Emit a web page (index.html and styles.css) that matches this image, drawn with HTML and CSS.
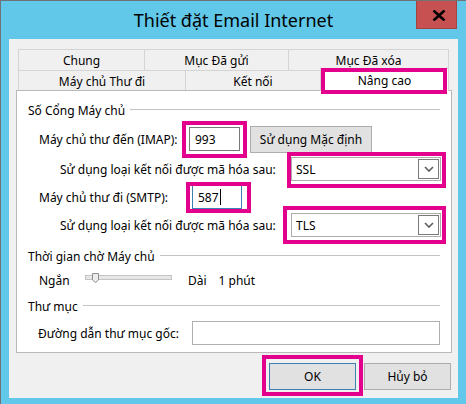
FILE: index.html
```html
<!DOCTYPE html>
<html lang="vi">
<head>
<meta charset="utf-8">
<title>Thiết đặt Email Internet</title>
<link rel="stylesheet" href="styles.css">
</head>
<body>
<div class="window">
  <div class="titlebar">
    <span class="tb-spacer"></span>
    <div class="title">Thiết đặt Email Internet</div>
    <div class="close">
      <svg width="14" height="11" viewBox="0 0 14 11"><path d="M1.5 0.5 L12.5 10.5 M12.5 0.5 L1.5 10.5" stroke="#000" stroke-width="2.6" fill="none"/></svg>
    </div>
  </div>
  <div class="client">
    <div class="tabs">
      <div class="tabrow row1">
        <div class="tab t-chung">Chung</div>
        <div class="tab t-sent">Mục Đã gửi</div>
        <div class="tab t-del">Mục Đã xóa</div>
      </div>
      <div class="tabrow row2">
        <div class="tab t-out">Máy chủ Thư đi</div>
        <div class="tab t-conn">Kết nối</div>
        <div class="tab t-adv selected">Nâng cao<span class="hl hl-tab"></span></div>
      </div>
    </div>
    <div class="panel">
      <div class="group-head gh1"><span>Số Cổng Máy chủ</span><i class="rule"></i></div>

      <div class="row r-imap">
        <span class="lbl lbl-port">Máy chủ thư đến (IMAP):</span>
        <span class="anno">
          <span class="field f-imap">993</span>
          <span class="hl hl-imap"></span>
        </span>
        <span class="btn btn-default">Sử dụng Mặc định</span>
      </div>

      <div class="row r-ssl">
        <span class="lbl lbl-enc">Sử dụng loại kết nối được mã hóa sau:</span>
        <span class="anno">
          <span class="select"><span>SSL</span><span class="drop"><svg width="10" height="6" viewBox="0 0 10 6"><path d="M1 1 L5 5 L9 1" stroke="#5b5b5b" stroke-width="1.6" fill="none"/></svg></span></span>
          <span class="hl hl-ssl"></span>
        </span>
      </div>

      <div class="row r-smtp">
        <span class="lbl lbl-smtp">Máy chủ thư đi (SMTP):</span>
        <span class="anno">
          <span class="field f-smtp focused">587<i class="caret"></i></span>
          <span class="hl hl-smtp"></span>
        </span>
      </div>

      <div class="row r-tls">
        <span class="lbl lbl-enc">Sử dụng loại kết nối được mã hóa sau:</span>
        <span class="anno">
          <span class="select"><span>TLS</span><span class="drop"><svg width="10" height="6" viewBox="0 0 10 6"><path d="M1 1 L5 5 L9 1" stroke="#5b5b5b" stroke-width="1.6" fill="none"/></svg></span></span>
          <span class="hl hl-tls"></span>
        </span>
      </div>

      <div class="group-head gh2"><span>Thời gian chờ Máy chủ</span><i class="rule"></i></div>

      <div class="row r-slider">
        <span class="lbl lbl-short">Ngắn</span>
        <span class="track"><span class="thumb"><svg width="7" height="10" viewBox="0 0 7 10"><path d="M0.5 0.5 H6.5 V7 L3.5 9.5 L0.5 7 Z" fill="#ececec" stroke="#8f8f8f" stroke-width="1"/></svg></span></span>
        <span class="lbl-long">Dài</span>
        <span class="lbl-time">1 phút</span>
      </div>

      <div class="group-head gh3"><span>Thư mục</span><i class="rule"></i></div>

      <div class="row r-path">
        <span class="lbl lbl-path">Đường dẫn thư mục gốc:</span>
        <span class="field f-path"></span>
      </div>
    </div>
    <div class="buttons">
      <span class="anno">
        <span class="btn btn-ok">OK</span>
        <span class="hl hl-ok"></span>
      </span>
      <span class="btn btn-cancel">Hủy bỏ</span>
    </div>
  </div>
</div>
</body>
</html>
```
FILE: styles.css
```css
* { box-sizing: border-box; }
html, body { margin: 0; padding: 0; }
body {
  width: 466px;
  height: 404px;
  overflow: hidden;
  background: #61c8ea;
  font-family: "Noto Sans", "Open Sans", sans-serif;
  font-size: 12px;
  color: #000;
}
.window {
  width: 466px;
  height: 404px;
  background: #61c8ea;
  border-left: 1px solid #6f7376;
  border-top: 1px solid #6f7376;
  display: flex;
  flex-direction: column;
}
.titlebar {
  height: 38px;
  flex: none;
  display: grid;
  grid-template-columns: 1fr auto 1fr;
  padding: 0 9px;
}
.title {
  font-size: 18px;
  line-height: 38px;
  white-space: nowrap;
  color: #000;
}
.close {
  justify-self: end;
  align-self: start;
  width: 41px;
  height: 28px;
  background: #c75050;
  border: 1px solid #a54343;
  border-top: none;
  display: flex;
  align-items: flex-start;
  padding: 9px 0 0 15px;
}
.close svg { display: block; }
.client {
  flex: 1;
  margin: 0 8px 6px 8px;
  background: #f0f0f0;
  padding-top: 10px;
  display: flex;
  flex-direction: column;
}
.tabs { margin-left: 9px; }
.tabrow { display: flex; }
.row1 { height: 21px; }
.row2 { height: 20px; }
.tab {
  border: 1px solid #d4d4d4;
  border-bottom: none;
  background: #f0f0f0;
  display: flex;
  align-items: center;
  justify-content: center;
  white-space: nowrap;
}
.tab + .tab { margin-left: -1px; }
.row1 .tab { height: 21px; }
.row2 .tab { height: 20px; padding-top: 2px; }
.t-chung { width: 127px; }
.t-sent { width: 145px; }
.t-del { width: 161px; }
.t-out { width: 168px; }
.t-conn { width: 136px; }
.row2 .tab.selected {
  width: 129px;
  height: 23px;
  margin-top: -2px;
  padding-top: 0;
  background: #fff;
  position: relative;
  z-index: 2;
}
.panel {
  margin-left: 7px;
  width: 436px;
  height: 263px;
  background: #fff;
  border: 1px solid #b9b9b9;
  padding: 7px 11px 0 11px;
  display: flex;
  flex-direction: column;
}
.group-head {
  height: 24px;
  display: flex;
  align-items: center;
  white-space: nowrap;
}
.rule {
  flex: 1;
  height: 1px;
  background: #c4c4c4;
  margin-left: 5px;
  margin-bottom: 2px;
}
.gh2 { margin-top: 7px; }
.gh3 { margin-top: 2px; }
.row {
  height: 24px;
  display: flex;
  align-items: center;
  white-space: nowrap;
}
.r-imap { margin-top: 5px; padding-left: 11px; }
.r-ssl { margin-top: 6px; padding-left: 32px; }
.r-smtp { margin-top: 4px; padding-left: 11px; }
.r-tls { margin-top: 4px; padding-left: 32px; }
.r-slider { margin-top: 0; padding-left: 11px; }
.r-path { margin-top: 3px; padding-left: 10px; }
.lbl { flex: none; }
.lbl-port { width: 150px; }
.lbl-smtp { width: 153px; }
.lbl-enc { width: 231px; }
.lbl-path { width: 154px; }
.lbl-short { width: 46px; }
.anno { position: relative; display: inline-flex; flex: none; }
.field {
  display: flex;
  align-items: center;
  height: 24px;
  border: 1px solid #7a7a7a;
  background: #fff;
  padding-left: 5px;
}
.f-imap { width: 51px; }
.f-smtp { width: 50px; }
.f-smtp.focused { border-color: #3c7fb1; }
.caret {
  display: inline-block;
  width: 1px;
  height: 16px;
  background: #000;
  margin-left: 1px;
}
.f-path { width: 249px; border-color: #b0b0b0; }
.btn {
  display: flex;
  align-items: center;
  justify-content: center;
  height: 27px;
  background: #e1e1e1;
  border: 1px solid #adadad;
  white-space: nowrap;
  flex: none;
}
.btn-default { width: 122px; margin-left: 10px; }
.select {
  width: 150px;
  height: 24px;
  border: 1px solid #acacac;
  background: #fff;
  display: flex;
  align-items: center;
  justify-content: space-between;
  padding-left: 4px;
}
.drop {
  width: 21px;
  height: 20px;
  border: 1px solid #7a7a7a;
  margin-right: 1px;
  display: flex;
  align-items: center;
  justify-content: center;
}
.drop svg { display: block; }
.track {
  position: relative;
  width: 87px;
  height: 5px;
  background: #e7e7e7;
  border: 1px solid #c4c4c4;
  margin-bottom: 6px;
  flex: none;
}
.thumb {
  position: absolute;
  left: 6px;
  top: -3px;
  display: block;
}
.thumb svg { display: block; }
.lbl-long { margin-left: 16px; }
.lbl-time { margin-left: 12px; }
.buttons {
  margin-top: 10px;
  display: flex;
  justify-content: flex-end;
  gap: 8px;
  padding-right: 7px;
}
.btn-ok { width: 87px; border-color: #3c7fb1; }
.btn-cancel { width: 87px; }
.hl {
  position: absolute;
  border: 4px solid #e3008c;
  pointer-events: none;
  z-index: 3;
}
.hl-tab { left: 0; top: -1px; right: 1px; bottom: -3px; }
.hl-imap { left: -7px; top: -6px; right: -7px; bottom: -7px; }
.hl-smtp { left: -6px; top: -3px; right: -9px; bottom: -4px; }
.hl-ssl { left: -4px; top: -5px; right: -5px; bottom: -7px; }
.hl-tls { left: -8px; top: -7px; right: -5px; bottom: -7px; }
.hl-ok { left: -7px; top: -8px; right: -7px; bottom: -6px; }
```
